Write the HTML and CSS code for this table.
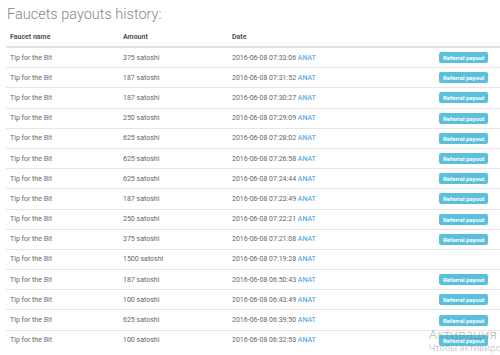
FILE: index.html
```html
<!DOCTYPE html>
<html lang="en">
<head>
    <meta charset="UTF-8">
    <title>Faucets payouts history</title>
    <link rel="stylesheet" href="styles.css">
</head>
<body>
    <div class="page">
        <h2 class="page-title">Faucets payouts history:</h2>
        <table class="payouts">
            <thead>
                <tr>
                    <th class="col-name">Faucet name</th>
                    <th class="col-amount">Amount</th>
                    <th class="col-date">Date</th>
                    <th class="col-type"></th>
                </tr>
            </thead>
            <tbody>
                <tr><td>Tip for the <a class="faucet" href="#">Bit</a></td><td>375 satoshi</td><td>2016-06-08 07:33:06 <a href="#">ANAT</a></td><td><span class="label">Referral payout</span></td></tr>
                <tr><td>Tip for the <a class="faucet" href="#">Bit</a></td><td>187 satoshi</td><td>2016-06-08 07:31:52 <a href="#">ANAT</a></td><td><span class="label">Referral payout</span></td></tr>
                <tr><td>Tip for the <a class="faucet" href="#">Bit</a></td><td>187 satoshi</td><td>2016-06-08 07:30:27 <a href="#">ANAT</a></td><td><span class="label">Referral payout</span></td></tr>
                <tr><td>Tip for the <a class="faucet" href="#">Bit</a></td><td>250 satoshi</td><td>2016-06-08 07:29:09 <a href="#">ANAT</a></td><td><span class="label">Referral payout</span></td></tr>
                <tr><td>Tip for the <a class="faucet" href="#">Bit</a></td><td>625 satoshi</td><td>2016-06-08 07:28:02 <a href="#">ANAT</a></td><td><span class="label">Referral payout</span></td></tr>
                <tr><td>Tip for the <a class="faucet" href="#">Bit</a></td><td>625 satoshi</td><td>2016-06-08 07:26:58 <a href="#">ANAT</a></td><td><span class="label">Referral payout</span></td></tr>
                <tr><td>Tip for the <a class="faucet" href="#">Bit</a></td><td>625 satoshi</td><td>2016-06-08 07:24:44 <a href="#">ANAT</a></td><td><span class="label">Referral payout</span></td></tr>
                <tr><td>Tip for the <a class="faucet" href="#">Bit</a></td><td>187 satoshi</td><td>2016-06-08 07:23:49 <a href="#">ANAT</a></td><td><span class="label">Referral payout</span></td></tr>
                <tr><td>Tip for the <a class="faucet" href="#">Bit</a></td><td>250 satoshi</td><td>2016-06-08 07:22:21 <a href="#">ANAT</a></td><td><span class="label">Referral payout</span></td></tr>
                <tr><td>Tip for the <a class="faucet" href="#">Bit</a></td><td>375 satoshi</td><td>2016-06-08 07:21:08 <a href="#">ANAT</a></td><td><span class="label">Referral payout</span></td></tr>
                <tr><td>Tip for the <a class="faucet" href="#">Bit</a></td><td>1500 satoshi</td><td>2016-06-08 07:19:28 <a href="#">ANAT</a></td><td></td></tr>
                <tr><td>Tip for the <a class="faucet" href="#">Bit</a></td><td>187 satoshi</td><td>2016-06-08 06:50:43 <a href="#">ANAT</a></td><td><span class="label">Referral payout</span></td></tr>
                <tr><td>Tip for the <a class="faucet" href="#">Bit</a></td><td>100 satoshi</td><td>2016-06-08 06:43:49 <a href="#">ANAT</a></td><td><span class="label">Referral payout</span></td></tr>
                <tr><td>Tip for the <a class="faucet" href="#">Bit</a></td><td>625 satoshi</td><td>2016-06-08 06:39:50 <a href="#">ANAT</a></td><td><span class="label">Referral payout</span></td></tr>
                <tr><td>Tip for the <a class="faucet" href="#">Bit</a></td><td>100 satoshi</td><td>2016-06-08 06:32:53 <a href="#">ANAT</a></td><td><span class="label">Referral payout</span></td></tr>
            </tbody>
        </table>
    </div>

    <div class="watermark">
        <div class="watermark-title">Активация Windows</div>
        <div class="watermark-text">Чтобы активировать</div>
    </div>
</body>
</html>
```

FILE: styles.css
```css
/* Payouts history table */
body {
    margin: 0;
    font-family: Roboto, "Liberation Sans", sans-serif;
    color: #666;
    background-color: #fff;
    overflow: hidden;
}

.page {
    padding: 0 0 0 6px;
}

.page-title {
    margin: 0;
    padding: 6px 0 0 1px;
    font-size: 14.5px;
    font-weight: 300;
    color: #888;
    line-height: 18px;
}

.payouts {
    width: 100%;
    margin-top: 3px;
    border-collapse: collapse;
    font-size: 7px;
}

.payouts th,
.payouts td {
    padding: 0 4px;
    text-align: left;
    vertical-align: middle;
}

.payouts th {
    height: 19px;
    font-weight: 700;
    color: #555;
    border-bottom: 2px solid #e3e3e3;
}

.payouts td {
    height: 19.2px;
    border-top: 1px solid #e6e6e6;
    color: #666;
}

.payouts tbody tr:first-child td {
    border-top: none;
}

.col-name {
    width: 105px;
}

.col-amount {
    width: 101px;
}

.col-date {
    width: 199px;
}

.payouts a {
    color: #3a9ad9;
    text-decoration: none;
}

.payouts a.faucet {
    color: #4f7796;
}

.label {
    display: inline-block;
    padding: 2px 4px;
    background-color: #5bc0de;
    color: #fff;
    font-size: 6px;
    font-weight: 700;
    line-height: 7px;
    border-radius: 2px;
}

.watermark {
    position: absolute;
    left: 429px;
    top: 326px;
    color: rgba(120, 120, 120, 0.45);
    font-family: "Open Sans", "Liberation Sans", sans-serif;
    white-space: nowrap;
}

.watermark-title {
    font-size: 13px;
    line-height: 16px;
}

.watermark-text {
    font-size: 9px;
    line-height: 11px;
}
```
